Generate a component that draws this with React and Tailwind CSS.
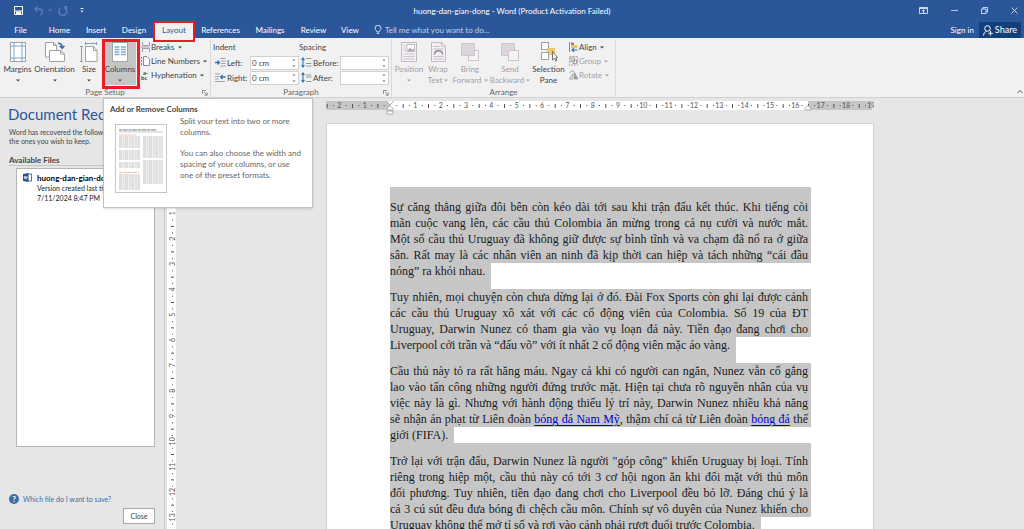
import React, { useState } from 'react';

const tabs = [
  { name: 'Home', width: 'w-[37px]' },
  { name: 'Insert', width: 'w-[36px]' },
  { name: 'Design', width: 'w-[40px]' },
  { name: 'Layout', width: 'w-[40px]' },
  { name: 'References', width: 'w-[53px]' },
  { name: 'Mailings', width: 'w-[46px]' },
  { name: 'Review', width: 'w-[41px]' },
  { name: 'View', width: 'w-[32px]' },
];

const paragraphs = [
  {
    className: 'pt-[12px]',
    lines: [
      'Sự căng thẳng giữa đôi bên còn kéo dài tới sau khi trận đấu kết thúc. Khi tiếng còi',
      'mãn cuộc vang lên, các cầu thủ Colombia ăn mừng trong cả nụ cười và nước mắt.',
      'Một số cầu thủ Uruguay đã không giữ được sự bình tĩnh và va chạm đã nổ ra ở giữa',
      'sân. Rất may là các nhân viên an ninh đã kịp thời can hiệp và tách những “cái đầu',
    ],
    last: 'nóng” ra khỏi nhau.',
    lastClass: 'pb-[10px]',
  },
  {
    className: '',
    lines: [
      'Tuy nhiên, mọi chuyện còn chưa dừng lại ở đó. Đài Fox Sports còn ghi lại được cảnh',
      'các cầu thủ Uruguay xô xát với các cổ động viên của Colombia. Số 19 của ĐT',
      'Uruguay, Darwin Nunez có tham gia vào vụ loạn đả này. Tiền đạo đang chơi cho',
    ],
    last: 'Liverpool cởi trần và “đấu võ” với ít nhất 2 cổ động viên mặc áo vàng.',
    lastClass: 'pb-[10px]',
  },
  {
    className: '',
    lines: [
      'Cầu thủ này tỏ ra rất hăng máu. Ngay cả khi có người can ngăn, Nunez vẫn cố gắng',
      'lao vào tấn công những người đứng trước mặt. Hiện tại chưa rõ nguyên nhân của vụ',
      'việc này là gì. Nhưng với hành động thiếu lý trí này, Darwin Nunez nhiều khả năng',
      <>
        sẽ nhận án phạt từ Liên đoàn <DocLink>bóng đá Nam Mỹ</DocLink>, thậm chí cả từ Liên đoàn{' '}
        <DocLink>bóng đá</DocLink> thế
      </>,
    ],
    last: 'giới (FIFA).',
    lastClass: '',
  },
  {
    className: 'pt-[10px]',
    lines: [
      'Trở lại với trận đấu, Darwin Nunez là người "góp công" khiến Uruguay bị loại. Tính',
      'riêng trong hiệp một, cầu thủ này có tới 3 cơ hội ngon ăn khi đối mặt với thủ môn',
      'đối phương. Tuy nhiên, tiền đạo đang chơi cho Liverpool đều bỏ lỡ. Đáng chú ý là',
      'cả 3 cú sút đều đưa bóng đi chệch cầu môn. Chính sự vô duyên của Nunez khiến cho',
    ],
    last: 'Uruguay không thể mở tỉ số và rơi vào cảnh phải rượt đuổi trước Colombia.',
    lastClass: '',
  },
];

function DocLink({ children }) {
  return (
    <a href="#" className="text-[#0000c8] underline underline-offset-2">
      {children}
    </a>
  );
}

const Caret = ({ className = '' }) => (
  <svg width="4" height="3" viewBox="0 0 4 3" className={`shrink-0 ${className}`}>
    <path d="M0 0.5h4L2 2.5z" fill="currentColor" />
  </svg>
);

const Launcher = () => (
  <button type="button" aria-label="More options" className="absolute right-[2px] bottom-[1px]">
    <svg width="6" height="6" viewBox="0 0 6 6" fill="none" stroke="#777" strokeWidth="0.8">
      <path d="M0.5 4V0.5H4M2 2l3 3M5.2 2.5v2.7H2.5" />
    </svg>
  </button>
);

/* Ribbon icons */

const MarginsIcon = () => (
  <svg width="16" height="20" viewBox="0 0 16 20" fill="none">
    <rect x="0.5" y="0.5" width="15" height="19" fill="#fff" stroke="#a0a0a0" />
    <path d="M4 1v18M12 1v18M1 4h14M1 16h14" stroke="#6b9ac4" strokeWidth="0.9" />
  </svg>
);

const OrientationIcon = () => (
  <svg width="20" height="20" viewBox="0 0 20 20" fill="none">
    <path d="M0.5 0.5h8l3 3V15H0.5z" fill="#fff" stroke="#a0a0a0" />
    <path d="M8.5 0.5v3h3" stroke="#a0a0a0" />
    <path d="M4.5 8.5h11l4 3.5v7.5h-15z" fill="#fff" stroke="#a0a0a0" />
    <path d="M15.5 8.5v3.5h4" stroke="#a0a0a0" />
    <path d="M13 1.2c3 0 4.2 1.3 4.2 4M14.7 3.8l2.5 2.5L19.5 3.8" stroke="#3572ad" strokeWidth="1.5" />
  </svg>
);

const SizeIcon = () => (
  <svg width="18" height="20" viewBox="0 0 18 20" fill="none">
    <path d="M5.5 4.5h8l3.5 4v11H5.5z" fill="#fff" stroke="#a0a0a0" />
    <path d="M13.5 4.5v4H17" stroke="#a0a0a0" />
    <path d="M5 1.5h12M5.5 0v3M16.5 0v3M1.5 4v15.5M0 4.5h3M0 19.5h3" stroke="#6b9ac4" strokeWidth="0.9" />
  </svg>
);

const ColumnsIcon = () => (
  <svg width="16" height="20" viewBox="0 0 16 20" fill="none">
    <rect x="0.5" y="0.5" width="15" height="19" fill="#fff" stroke="#a5a5a5" />
    <path d="M2.5 5h5M2.5 7.5h5M2.5 10h5M2.5 12.5h5M9 5h5M9 7.5h5M9 10h5M9 12.5h5" stroke="#7fadd6" strokeWidth="1.4" />
  </svg>
);

const PositionIcon = () => (
  <svg width="16" height="20" viewBox="0 0 16 20" fill="none" stroke="#c3bbc3">
    <rect x="0.5" y="0.5" width="15" height="19" fill="#f3eff3" />
    <rect x="6" y="2.5" width="7.5" height="7" fill="#fff" />
    <path d="M6.5 9l2.500-3 2 2 1-1 1.500 2z" fill="#a89fa8" />
    <path d="M2.5 3.5H5M2.5 6H5M2.5 8.5H5M2.5 12h11M2.5 14.5h11M2.5 17h11" strokeWidth="0.8" />
  </svg>
);

const WrapIcon = () => (
  <svg width="15" height="20" viewBox="0 0 15 20" fill="none" stroke="#c3bbc3">
    <path d="M0.5 0.5h10l4 4v15h-14z" fill="#f3eff3" />
    <path d="M10.5 0.5v4h4M2.5 4.5h6M2.5 7h10M2.5 14.5h10M2.5 17h10" strokeWidth="0.9" />
    <path d="M3.5 12.5c0-5 8-5 8 0" stroke="#8f868f" strokeWidth="1.5" />
  </svg>
);

const ForwardIcon = () => (
  <svg width="18" height="20" viewBox="0 0 18 20" fill="none" stroke="#cdc6cd">
    <path d="M14 8.5h3.5v10h-10V14" fill="#f5f1f5" />
    <rect x="0.5" y="1.5" width="13" height="12" fill="#dcd6dc" />
  </svg>
);

const BackwardIcon = () => (
  <svg width="18" height="20" viewBox="0 0 18 20" fill="none" stroke="#cdc6cd">
    <rect x="0.5" y="1.5" width="13" height="12" fill="#dcd6dc" />
    <rect x="7.5" y="8.5" width="10" height="10" fill="#f5f1f5" />
  </svg>
);

const SelectionIcon = () => (
  <svg width="18" height="20" viewBox="0 0 18 20" fill="none">
    <rect x="1.5" y="0.5" width="7" height="7" fill="#fff" stroke="#a0a0a0" />
    <rect x="7" y="6" width="8" height="7" fill="#f0c36d" />
    <rect x="1.5" y="10.5" width="7" height="7" fill="#fff" stroke="#a0a0a0" />
    <path d="M12.500 9.500v8.500l2-1.800 1.200 2.800 1.200-.6-1.200-2.700h2z" fill="#fff" stroke="#555" strokeWidth="0.8" />
  </svg>
);

const BreaksIcon = () => (
  <svg width="9" height="10" viewBox="0 0 9 10" fill="none" stroke="#a0a0a0">
    <path d="M1.5 0v3.500h7V0M1.5 10V6.500h7V10M0 5h9" />
  </svg>
);

const LineNumbersIcon = () => (
  <svg width="9" height="10" viewBox="0 0 9 10" fill="none">
    <path d="M2.5 0.5H6l2.500 2.500v6.500h-6z" fill="#fff" stroke="#8a8a8a" />
    <path d="M0.5 1v8" stroke="#4f86b8" strokeDasharray="2 1" />
  </svg>
);

const HyphenationIcon = () => (
  <svg width="9" height="10" viewBox="0 0 9 10" fill="#444" className="font-bold">
    <text x="2" y="5" fontSize="6">a-</text>
    <text x="0" y="10" fontSize="6">bc</text>
  </svg>
);

const AlignIcon = () => (
  <svg width="9" height="10" viewBox="0 0 9 10" fill="none">
    <path d="M0.5 0v10" stroke="#8a8a8a" />
    <rect x="2" y="0.5" width="3" height="2.5" fill="#8a8a8a" />
    <rect x="2" y="3" width="6.5" height="3" fill="#f0c36d" />
    <path d="M8.500 8H3M5 6L3 8l2 2" stroke="#3572ad" strokeWidth="1.1" />
  </svg>
);

const GroupIcon = () => (
  <svg width="9" height="10" viewBox="0 0 9 10" fill="none" stroke="#aaa1aa">
    <rect x="0.5" y="0.5" width="8" height="8.5" strokeDasharray="2 1" />
    <rect x="2" y="2" width="3.5" height="3.5" />
    <rect x="4" y="4" width="3.5" height="3.5" />
  </svg>
);

const RotateIcon = () => (
  <svg width="9" height="10" viewBox="0 0 9 10" fill="none" stroke="#aaa1aa">
    <path d="M5.500 2.500V9H9z" fill="#9d949d" />
    <path d="M4 3.500V9H0.500z" />
    <path d="M1 3c.5-2 2.500-2.500 4-1.500" />
  </svg>
);

const IndentIcon = ({ flip }) => (
  <svg width="11" height="9" viewBox="0 0 11 9" fill="none">
    {flip ? (
      <>
        <path d="M0 1h5M0 3.500h4M0 6h4M0 8.500h10" stroke="#999" strokeWidth="0.9" />
        <path d="M10.500 4H5.500M7.500 2l-2 2 2 2" stroke="#3572ad" strokeWidth="1.3" />
      </>
    ) : (
      <>
        <path d="M5 0.500h5.500M6 3h4.500M6 5.500h4.500M5 8h5.500" stroke="#999" strokeWidth="0.9" />
        <path d="M0 4.500h4.500M2.500 2.500l2 2-2 2" stroke="#3572ad" strokeWidth="1.3" />
      </>
    )}
  </svg>
);

const SpacingIcon = ({ after }) => (
  <svg width="11" height="11" viewBox="0 0 11 11" fill="none">
    <path d={after ? 'M5 3h5.500M5 5h5.500M5 9.500h5.500' : 'M5 1.500h5.500M5 6.500h5.500M5 9h5.500'} stroke="#999" />
    <path d="M2 1v9M0.500 3L2 1l1.500 2M0.500 8L2 10l1.500-2" stroke="#3572ad" strokeWidth="1.1" />
  </svg>
);

/* Ribbon controls */

const BigButton = ({ icon, label, second, width, disabled, caret = true, active, children }) => (
  <div className={`relative shrink-0 ${width}`}>
    <button
      type="button"
      disabled={disabled}
      className={`flex flex-col items-center w-full h-[45px] pt-[2px] whitespace-nowrap ${
        active ? 'bg-[#c5c5c5]' : ''
      } ${disabled ? 'text-[#a3a0a3]' : 'text-[#444]'}`}
    >
      <span className="h-[22px]">{icon}</span>
      <span className="leading-[11px]">{label}</span>
      <span className="flex items-center gap-[2px] h-[10px] leading-[10px]">
        {second}
        {caret && <Caret />}
      </span>
    </button>
    {children}
  </div>
);

const SmallButton = ({ icon, label, disabled }) => (
  <button
    type="button"
    disabled={disabled}
    className={`flex items-center gap-px h-[14px] whitespace-nowrap ${
      disabled ? 'text-[#a3a0a3]' : 'text-[#444]'
    }`}
  >
    {icon}
    <span>{label}</span>
    <Caret className="ml-[2px]" />
  </button>
);

const Spinner = ({ id, icon, label, value, labelWidth }) => {
  const [text, setText] = useState(value);

  return (
    <div className="flex items-center h-[15px]">
      {icon}
      <label htmlFor={id} className={`pl-px ${labelWidth}`}>
        {label}
      </label>
      <div className="flex items-center w-[49px] h-[14px] bg-white border border-[#d0d0d0]">
        <input
          id={id}
          type="text"
          value={text}
          onChange={(e) => setText(e.target.value)}
          className="w-0 flex-1 px-px outline-none"
        />
        <svg width="4" height="10" viewBox="0 0 4 10" fill="#666" className="mr-[2px]">
          <path d="M0.5 2.500l1.500-1.500 1.500 1.500zM0.5 7.500h3L2 9z" />
        </svg>
      </div>
    </div>
  );
};

const RibbonGroup = ({ label, width, launcher, children }) => (
  <div className={`relative flex flex-col shrink-0 h-[58px] border-r border-[#d9d9d9] ${width}`}>
    <div className="flex flex-1">{children}</div>
    <div className="h-[10px] leading-[11px] text-center text-[#666]">{label}</div>
    {launcher && <Launcher />}
  </div>
);

/* Rulers, one centimetre takes 25 and a third pixels */

const CM = 76 / 3;

const HorizontalRuler = () => {
  const marks = [];
  for (let q = -10; q <= 76; q++) {
    const x = 64 + (q * CM) / 4;
    if (q === 0) continue;
    if (q % 4 === 0) {
      marks.push(
        <text key={q} x={x} y="7" textAnchor="middle" fontSize="7">
          {Math.abs(q / 4)}
        </text>
      );
    } else if (q % 2 === 0) {
      marks.push(<rect key={q} x={x} y="3" width="1" height="4" />);
    } else {
      marks.push(<rect key={q} x={x} y="4" width="1" height="1" />);
    }
  }

  return (
    <svg width="548" height="14" viewBox="0 0 548 14" className="shrink-0">
      <rect width="546" height="9" fill="#c6c6c6" />
      <rect x="64" width="418" height="9" fill="#fff" />
      <g fill="#555">{marks}</g>
      <g fill="#fff" stroke="#999" strokeWidth="0.8">
        <path d="M61 -1h6v2l-3 3-3-3z" />
        <path d="M61 9V7.500l3-3 3 3V9zM61 10h6v3h-6z" />
        <path d="M479 9V7.500l3-3 3 3V9z" />
      </g>
    </svg>
  );
};

const VerticalRuler = () => {
  const marks = [];
  for (let q = 1; q <= 53; q++) {
    const y = 64 + (q * CM) / 4;
    if (q % 4 === 0) {
      marks.push(
        <text key={q} transform={`translate(8 ${y}) rotate(-90)`} textAnchor="middle" fontSize="7">
          {q / 4}
        </text>
      );
    } else if (q % 2 === 0) {
      marks.push(<rect key={q} x="4" y={y} width="3" height="1" />);
    } else {
      marks.push(<rect key={q} x="5" y={y} width="1" height="1" />);
    }
  }

  return (
    <svg width="9" height="700" viewBox="0 0 9 700" className="shrink-0">
      <rect width="9" height="64" fill="#c6c6c6" />
      <rect y="64" width="9" height="636" fill="#fff" />
      <g fill="#555">{marks}</g>
    </svg>
  );
};

const ColumnsPreview = () => {
  const left = [13, 15, 17, 19, 21, 23, 27, 29, 31, 33, 35, 39, 41, 43, 51, 53, 55, 57, 59, 61, 63, 65];
  const right = [13, 15, 17, 19, 21, 23, 25, 27, 29, 31, 33, 37, 39, 41, 43, 45, 47, 49, 51, 53, 55, 57, 59];

  return (
    <svg width="52" height="69" viewBox="0 0 52 69" className="shrink-0">
      <rect x="0.5" y="0.5" width="51" height="68" fill="#fff" stroke="#c6c6c6" />
      <path d="M4 6h38" stroke="#777" strokeWidth="1.2" strokeDasharray="3 0.7 5 0.7" />
      <path d="M4 8h44" stroke="#9db0c0" strokeWidth="0.6" />
      <path d="M4 11h17M4 48.500h20" stroke="#f3b999" strokeWidth="0.9" strokeDasharray="4 0.6" />
      <g stroke="#b5b5b5" strokeWidth="0.9" strokeDasharray="3 0.6 2 0.5">
        {left.map((y) => (
          <path key={y} d={`M4 ${y}h21`} />
        ))}
        {right.map((y) => (
          <path key={y} d={`M28 ${y}h20`} />
        ))}
      </g>
    </svg>
  );
};

const TitleBar = () => (
  <div className="grid grid-cols-[1fr_auto_1fr] items-center h-[21px] text-white">
    <div className="flex items-center pl-[14px]">
      <button type="button" aria-label="Save">
        <svg width="9" height="9" viewBox="0 0 9 9" fill="none" stroke="#fff">
          <path d="M0.500 0.500h8v8h-8zM0.500 5h8" />
          <rect x="2.5" y="6" width="4" height="2.5" fill="#fff" />
        </svg>
      </button>
      <button type="button" aria-label="Undo" className="flex items-center gap-1 ml-[11px] text-[#5b7fb8]">
        <svg width="10" height="10" viewBox="0 0 10 10" fill="none" stroke="currentColor" strokeWidth="1.3">
          <path d="M3.500 0.500L1 3l2.500 2.500M1 3h4.500C9 3 9.500 7 6.500 9" />
        </svg>
        <Caret />
      </button>
      <button type="button" aria-label="Repeat" className="ml-[6px] text-[#5b7fb8]">
        <svg width="10" height="10" viewBox="0 0 10 10" fill="none" stroke="currentColor" strokeWidth="1.3">
          <path d="M5.500 0.700h3v3M8 1.200L6.500 2.800M2.500 2a4 4 0 1 0 5.500 1" />
        </svg>
      </button>
      <button type="button" aria-label="Customize Quick Access Toolbar" className="ml-[12px]">
        <svg width="4" height="5" viewBox="0 0 4 5" fill="#dfe7f3">
          <path d="M0.500 0h3v1h-3zM0.500 2.500h3L2 4.500z" />
        </svg>
      </button>
    </div>
    <h1>huong-dan-gian-dong - Word (Product Activation Failed)</h1>
    <div className="flex items-center justify-end gap-[23px] pr-[6px]">
      <button type="button" aria-label="Ribbon Display Options">
        <svg width="9" height="7" viewBox="0 0 9 7" fill="none" stroke="#dfe7f3" strokeWidth="0.9">
          <path d="M0.500 0.500h8v6h-8zM0.500 1.500h8M4.500 6V3M3 4.200L4.500 2.800 6 4.200" />
        </svg>
      </button>
      <button type="button" aria-label="Minimize">
        <svg width="7" height="7" viewBox="0 0 7 7" stroke="#b9c9e2">
          <path d="M0 3.500h7" />
        </svg>
      </button>
      <button type="button" aria-label="Restore">
        <svg width="7" height="7" viewBox="0 0 7 7" fill="none" stroke="#dfe7f3" strokeWidth="0.9">
          <path d="M0.500 2h4.500v4.500H0.500zM2 2V0.500h4.500V5H5" />
        </svg>
      </button>
      <button type="button" aria-label="Close window">
        <svg width="7" height="7" viewBox="0 0 7 7" stroke="#dfe7f3" strokeWidth="0.9">
          <path d="M0.500 0.500l6 6M6.500 0.500l-6 6" />
        </svg>
      </button>
    </div>
  </div>
);

const TabBar = () => (
  <div className="flex h-[17px] text-white">
    <button type="button" className="w-[41px]">
      File
    </button>
    {tabs.map((tab) => (
      <div key={tab.name} className={`relative shrink-0 ${tab.width}`}>
        <button
          type="button"
          className={`w-full h-full ${tab.name === 'Layout' ? 'bg-[#f1f1f1] text-[#2b579a]' : ''}`}
        >
          {tab.name}
        </button>
        {tab.name === 'Layout' && (
          <div className="absolute z-10 -inset-x-px top-0 -bottom-[4px] border-2 border-[#ed1c24]" />
        )}
      </div>
    ))}
    <label className="flex flex-1 items-center gap-[3px] pl-[8px]">
      <svg width="8" height="10" viewBox="0 0 8 10" fill="none" stroke="#dfe7f3" strokeWidth="0.9">
        <path d="M2.800 7C2.800 5.500 1 5 1 3.300a3 3 0 0 1 6 0C7 5 5.200 5.500 5.200 7zM2.800 8.500h2.400" />
      </svg>
      <input
        type="text"
        aria-label="Tell me what you want to do"
        placeholder="Tell me what you want to do..."
        className="w-[130px] bg-transparent outline-none placeholder:text-[#c3d0e6]"
      />
    </label>
    <button type="button" className="px-[5px]">
      Sign in
    </button>
    <button type="button" className="flex items-center gap-[2px] mt-px mr-[3px] px-[4px] bg-[#133f7c] text-[9px]">
      <svg width="10" height="11" viewBox="0 0 10 11" fill="none" stroke="#fff">
        <circle cx="4.5" cy="3.5" r="2.8" />
        <path d="M0.500 10.500c.3-2.500 1.500-3.700 3-4.200M7.500 6v4.500M5.300 8.300h4.500" />
      </svg>
      Share
    </button>
  </div>
);

const Ribbon = () => (
  <div className="flex h-[60px] pt-px bg-[#f1f1f1] border-b border-[#d2d2d2] text-[#444]">
    <RibbonGroup label="Page Setup" width="w-[211px]" launcher>
      <div className="flex pt-px">
        <BigButton icon={<MarginsIcon />} label="Margins" width="w-[35px]" />
        <BigButton icon={<OrientationIcon />} label="Orientation" width="w-[39px]" />
        <BigButton icon={<SizeIcon />} label="Size" width="w-[30px]" />
        <BigButton icon={<ColumnsIcon />} label="Columns" width="w-[32px]" active>
          <div className="absolute z-10 -top-px -left-[2px] -right-[4px] -bottom-[2px] border-3 border-[#ed1c24]" />
        </BigButton>
      </div>
      <div className="flex flex-col pt-px pl-[5px]">
        <SmallButton icon={<BreaksIcon />} label="Breaks" />
        <SmallButton icon={<LineNumbersIcon />} label="Line Numbers" />
        <SmallButton icon={<HyphenationIcon />} label="Hyphenation" />
      </div>
    </RibbonGroup>

    <RibbonGroup label="Paragraph" width="w-[181px]" launcher>
      <div className="w-[88px] pt-px pl-[2px]">
        <div className="h-[15px] leading-[15px]">Indent</div>
        <div className="pl-[2px]">
          <Spinner id="indent-left" icon={<IndentIcon />} label="Left:" value="0 cm" labelWidth="w-[24px]" />
          <Spinner id="indent-right" icon={<IndentIcon flip />} label="Right:" value="0 cm" labelWidth="w-[24px]" />
        </div>
      </div>
      <div className="pt-px">
        <div className="h-[15px] leading-[15px]">Spacing</div>
        <div className="pl-[2px]">
          <Spinner id="space-before" icon={<SpacingIcon />} label="Before:" value="" labelWidth="w-[28px]" />
          <Spinner id="space-after" icon={<SpacingIcon after />} label="After:" value="" labelWidth="w-[28px]" />
        </div>
      </div>
    </RibbonGroup>

    <RibbonGroup label="Arrange" width="w-[224px]">
      <div className="flex pt-px">
        <BigButton icon={<PositionIcon />} label="Position" width="w-[34px]" disabled />
        <BigButton icon={<WrapIcon />} label="Wrap" second="Text" width="w-[24px]" disabled />
        <BigButton icon={<ForwardIcon />} label="Bring" second="Forward" width="w-[40px]" disabled />
        <BigButton icon={<BackwardIcon />} label="Send" second="Backward" width="w-[40px]" disabled />
        <BigButton icon={<SelectionIcon />} label="Selection" second="Pane" width="w-[37px]" caret={false} />
      </div>
      <div className="flex flex-col pt-px pl-[2px]">
        <SmallButton icon={<AlignIcon />} label="Align" />
        <SmallButton icon={<GroupIcon />} label="Group" disabled />
        <SmallButton icon={<RotateIcon />} label="Rotate" disabled />
      </div>
    </RibbonGroup>

    <div className="flex flex-1 items-end justify-end pb-[3px] pr-px">
      <button type="button" aria-label="Collapse the Ribbon">
        <svg width="6" height="5" viewBox="0 0 6 5" fill="none" stroke="#555">
          <path d="M0.500 4L3 1.500 5.500 4" />
        </svg>
      </button>
    </div>
  </div>
);

const RecoveryPane = () => (
  <aside className="flex flex-col shrink-0 w-[165px] pb-[5px] border-r border-[#c9c9c9] text-[#444]">
    <h2 className="pl-[8px] pt-[6px] text-[15px] leading-[20px] text-[#2b579a] whitespace-nowrap">
      Document Recovery
    </h2>
    <p className="pl-[9px] pt-[4px] text-[7px] leading-[9px] whitespace-nowrap">
      Word has recovered the following files. Save
      <br />
      the ones you wish to keep.
    </p>
    <h3 className="ml-[9px] mr-[9px] mt-[9px] h-[11px] leading-[10px] font-bold border-b border-[#c6c6c6]">
      Available Files
    </h3>
    <div className="flex-1 ml-[16px] mr-[9px] mt-[2px] bg-white border border-[#b5b5b5]">
      <div className="flex gap-[5px] pl-[6px] pt-[4px] text-[#222] whitespace-nowrap">
        <svg width="9" height="9" viewBox="0 0 9 9" className="shrink-0">
          <rect x="4" y="1" width="4.5" height="7" fill="#fff" stroke="#2b579a" strokeWidth="0.8" />
          <path d="M0 1l5.500-1v9L0 8z" fill="#2b579a" />
          <path d="M1.200 3l.7 3 .8-2.700L3.500 6l.8-3" fill="none" stroke="#fff" strokeWidth="0.7" />
        </svg>
        <div className="text-[7px] leading-[10px]">
          <div className="text-[8px] font-bold text-black">huong-dan-gian-dong</div>
          <div>Version created last time</div>
          <div>7/11/2024 8:47 PM</div>
        </div>
      </div>
    </div>
    <div className="flex items-center h-[14px] mt-[45px] pl-[9px]">
      <a href="#" className="flex items-center gap-[4px] text-[7px] text-[#3a6ea8]">
        <svg width="10" height="10" viewBox="0 0 10 10">
          <circle cx="5" cy="5" r="5" fill="#3a6ea8" />
          <text x="5" y="8" textAnchor="middle" fontSize="8" fontWeight="bold" fill="#fff">
            ?
          </text>
        </svg>
        Which file do I want to save?
      </a>
    </div>
    <button
      type="button"
      className="self-end w-[32px] h-[16px] mt-[2px] mr-[9px] bg-[#fdfdfd] border border-[#ababab] text-[7px]"
    >
      Close
    </button>
  </aside>
);

const ColumnsTooltip = () => (
  <div
    role="tooltip"
    className="absolute z-20 left-[103px] top-0 w-[210px] h-[110px] px-[6px] pt-[5px] bg-white border border-[#c3c3c3] shadow-sm text-[#666]"
  >
    <div className="h-[11px] leading-[10px] font-bold text-[#444]">Add or Remove Columns</div>
    <div className="flex gap-[13px] pl-[5px]">
      <div className="pt-[9px]">
        <ColumnsPreview />
      </div>
      <div className="pt-px leading-[11px] whitespace-nowrap">
        <p>
          Split your text into two or more
          <br />
          columns.
        </p>
        <p className="pt-[10px]">
          You can also choose the width and
          <br />
          spacing of your columns, or use
          <br />
          one of the preset formats.
        </p>
      </div>
    </div>
  </div>
);

const DocumentPage = () => (
  <article className="w-[548px] pt-[63px] pl-[63px] pr-[62px] bg-white border-t border-x border-[#d2d2d2] font-['Liberation_Serif',serif] text-[12px] leading-[16px] text-[#1a1a1a]">
    {paragraphs.map((p, i) => (
      <div key={i}>
        <div className={`bg-[#c6c6c6] ${p.className}`}>
          {p.lines.map((line, j) => (
            <div key={j} className="h-[16px] pr-[3px] whitespace-nowrap [text-align-last:justify]">
              {line}
            </div>
          ))}
        </div>
        <div className={`w-fit pr-[6px] bg-[#c6c6c6] whitespace-nowrap ${p.lastClass}`}>{p.last}</div>
      </div>
    ))}
  </article>
);

const App = () => {
  return (
    <div className="flex flex-col h-screen overflow-hidden bg-[#e6e6e6] font-['Lato','Noto_Sans',sans-serif] text-[8px] leading-[10px]">
      <header>
        <div className="bg-[#2b579a]">
          <TitleBar />
          <TabBar />
        </div>
        <Ribbon />
      </header>

      <div className="relative flex flex-1 min-h-0">
        <RecoveryPane />
        <main className="flex flex-1 min-w-0 pl-[2px] overflow-hidden">
          <div className="pt-[26px]">
            <VerticalRuler />
          </div>
          <div className="flex flex-col flex-1 items-center pt-[3px]">
            <HorizontalRuler />
            <div className="flex flex-1 pt-[8px]">
              <DocumentPage />
            </div>
          </div>
        </main>
        <ColumnsTooltip />
      </div>
    </div>
  );
};

export default App;
